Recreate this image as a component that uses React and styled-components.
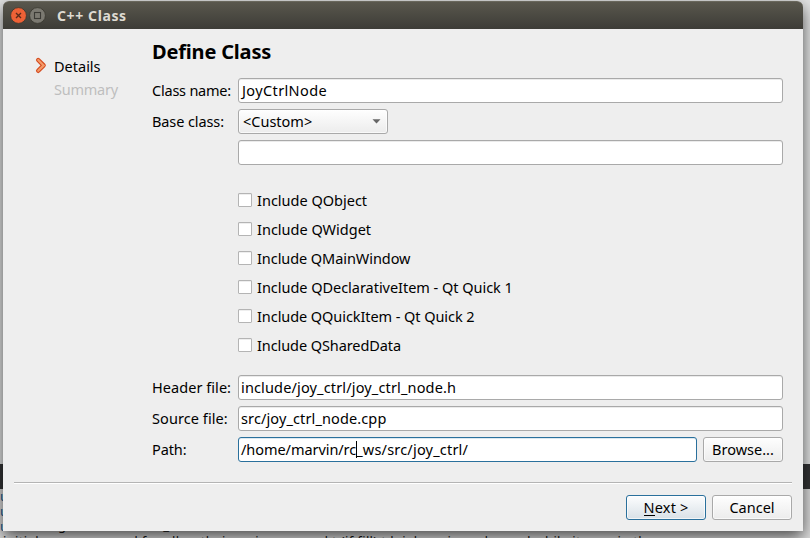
import React from "react";
import styled, { createGlobalStyle, css } from "styled-components";

const GlobalStyle = createGlobalStyle`
  * { box-sizing: border-box; }
  body { margin: 0; overflow: hidden; }
`;

const Desktop = styled.div`
  position: relative;
  width: 810px;
  height: 538px;
  overflow: hidden;
  padding: 1px 7px 0 3px;
  background: linear-gradient(#e2e3e3 0 464px, #343536 464px 489px, #dcdcdc 489px);
  font-family: "Noto Sans", "Open Sans", sans-serif;
  font-size: 14.5px;
  color: #000;
`;

const EditorText = styled.div`
  position: absolute;
  left: ${(p) => p.$x}px;
  top: ${(p) => p.$y}px;
  font-size: 13px;
  line-height: 15px;
  letter-spacing: 0.35px;
  white-space: pre;
  color: ${(p) => p.$color || "#111"};
`;

const Window = styled.main`
  position: relative;
  width: 800px;
  height: 530px;
  display: flex;
  flex-direction: column;
  background: #eee;
  border-radius: 6px 6px 0 0;
  box-shadow: 0 6px 16px rgba(0, 0, 0, 0.66);
`;

const TitleBar = styled.header`
  height: 28px;
  flex: none;
  display: flex;
  align-items: center;
  padding-left: 7px;
  border-radius: 6px 6px 0 0;
  border-top: 1px solid #69675c;
  background: linear-gradient(#59574d, #3d3c37);
`;

const WindowIcon = styled.svg`
  width: 17px;
  height: 17px;
  margin-right: 2px;
`;

const Title = styled.h1`
  margin: 0 0 0 9px;
  font-size: 14px;
  line-height: 26px;
  letter-spacing: 0.6px;
  font-weight: 700;
  color: #dfdbd2;
`;

const Body = styled.div`
  height: 453px;
  display: flex;
`;

const Steps = styled.nav`
  width: 149px;
  padding: 26px 0 0 32px;
`;

const Step = styled.div`
  height: 23px;
  display: flex;
  align-items: center;
  line-height: 23px;
  padding-left: ${(p) => (p.$active ? 0 : 19)}px;
  color: ${(p) => (p.$active ? "#000" : "#bebebe")};
`;

const StepArrow = styled.svg`
  width: 12px;
  height: 18px;
  margin: -3px 7px 0 0;
`;

const Text = styled.span`
  letter-spacing: ${(p) => p.$track || 0}px;
  white-space: pre;
`;

const Form = styled.section`
  width: 631px;
`;

const Heading = styled.h2`
  margin: 9px 0 13px;
  font-size: 20px;
  line-height: 27px;
  letter-spacing: -0.18px;
  font-weight: 700;
`;

const FieldRow = styled.div`
  display: grid;
  grid-template-columns: 86px 1fr;
  height: 25px;
  margin-bottom: 6px;
`;

const Label = styled.label`
  line-height: 25px;
  letter-spacing: ${(p) => p.$track || 0}px;
  white-space: nowrap;
`;

const FieldGroup = styled.div`
  display: flex;
  gap: 6px;
`;

const Input = styled.div`
  flex: 1;
  height: 25px;
  padding-left: ${(p) => p.$indent ?? 2}px;
  display: flex;
  line-height: 23px;
  border: 1px solid ${(p) => (p.$focus ? "#2a709c" : "#a9a9a9")};
  border-radius: 3px;
  background: #fff;
  box-shadow: inset 0 1px 0 ${(p) => (p.$focus ? "#dce8ef" : "#ebebeb")};
`;

const Caret = styled.i`
  width: 1px;
  height: 17px;
  margin: 3px -1px 0 0;
  background: #000;
`;

const raised = css`
  height: 25px;
  line-height: 23px;
  border: 1px solid #a9a9a9;
  border-radius: 3px;
  background: linear-gradient(#fefefe, #ececec);
  box-shadow: inset 0 0 0 1px rgba(255, 255, 255, 0.65);
`;

const Select = styled.div`
  ${raised}
  width: 150px;
  padding: 0 6px 0 4px;
  display: flex;
  align-items: center;
  justify-content: space-between;
`;

const Button = styled.button`
  ${raised}
  width: 80px;
  padding: 0;
  font: inherit;
  line-height: 23px;
  color: #000;
  ${(p) =>
    p.$primary &&
    css`
      border-color: #2a709c;
      background: linear-gradient(#fcfdfe, #d9e1e7);
    `}
`;

const Mnemonic = styled.span`
  display: inline-block;
  height: 18px;
  line-height: 18px;
  border-bottom: 1px solid #000;
`;

const CheckList = styled.div`
  margin: 21px 0 0 86px;
  height: 189px;
`;

const CheckRow = styled.div`
  height: 29px;
  line-height: 29px;
  display: flex;
`;

const CheckBox = styled.span`
  width: 14px;
  height: 14px;
  margin: 7px 5px 0 0;
  border: 1px solid #b4b4b4;
  border-radius: 1px;
  background: #fff;
  box-shadow: inset 0 1px 0 #eee;
`;

const Footer = styled.footer`
  margin: 0 11px;
  padding-top: 12px;
  border-top: 1px solid #b4b4b4;
  box-shadow: inset 0 1px 0 #fff;
  display: flex;
  justify-content: flex-end;
  gap: 6px;
`;

const options = [
  ["Include QObject", 0],
  ["Include QWidget", 0],
  ["Include QMainWindow", -0.07],
  ["Include QDeclarativeItem - Qt Quick 1", -0.03],
  ["Include QQuickItem - Qt Quick 2", -0.07],
  ["Include QSharedData", -0.09],
];

function CloseIcon() {
  return (
    <WindowIcon viewBox="0 0 17 17">
      <circle cx="8.5" cy="8.5" r="7.9" fill="#ee6136" stroke="#39372f" strokeWidth="0.8" />
      <path d="M6 6l5 5M11 6l-5 5" stroke="#5b2a1a" strokeWidth="1.4" />
    </WindowIcon>
  );
}

function MaximizeIcon() {
  return (
    <WindowIcon viewBox="0 0 17 17">
      <circle cx="8.5" cy="8.5" r="7.9" fill="#7b7971" stroke="#39372f" strokeWidth="0.8" />
      <rect x="5.5" y="5.5" width="6" height="6" fill="none" stroke="#3b3a35" strokeWidth="1.1" />
    </WindowIcon>
  );
}

export default function App() {
  return (
    <>
      <GlobalStyle />
      <Desktop>
        <EditorText $x={0} $y={489} $color="#1a5c93">u</EditorText>
        <EditorText $x={0} $y={504} $color="#1a5c93">u</EditorText>
        <EditorText $x={0} $y={519} $color="#1a5c93">u</EditorText>
        <EditorText $x={58} $y={518}>{"g                          _"}</EditorText>
        <EditorText $x={3} $y={534}>
          {"initial, messages and for all or their main uses and t (if fill) t.h.i. base in nodes and while it runs in the scope"}
        </EditorText>
        <Window>
          <TitleBar>
            <CloseIcon />
            <MaximizeIcon />
            <Title>C++ Class</Title>
          </TitleBar>
          <Body>
            <Steps>
              <Step $active>
                <StepArrow viewBox="0 0 12 18">
                  <path d="M3.2 4L8.6 9.4L3.2 14.8" fill="none" stroke="#d4481c" strokeWidth="4.4" strokeLinejoin="round" strokeLinecap="round" />
                  <path d="M3.2 4L8.6 9.4L3.2 14.8" fill="none" stroke="#f39a68" strokeWidth="2.2" strokeLinecap="round" />
                </StepArrow>
                <Text>Details</Text>
              </Step>
              <Step>
                <Text $track={-0.25}>Summary</Text>
              </Step>
            </Steps>
            <Form>
              <Heading>Define Class</Heading>
              <FieldRow>
                <Label $track={-0.22}>Class name:</Label>
                <Input $indent={3}><Text $track={0.38}>JoyCtrlNode</Text></Input>
              </FieldRow>
              <FieldRow>
                <Label $track={-0.1}>Base class:</Label>
                <Select>
                  <Text>&lt;Custom&gt;</Text>
                  <svg width="9" height="5" viewBox="0 0 9 5"><path d="M0.5 0.3h8L4.5 4.6z" fill="#666" /></svg>
                </Select>
              </FieldRow>
              <FieldRow>
                <span />
                <Input />
              </FieldRow>
              <CheckList>
                {options.map(([name, track]) => (
                  <CheckRow key={name}>
                    <CheckBox />
                    <Text $track={track}>{name}</Text>
                  </CheckRow>
                ))}
              </CheckList>
              <FieldRow>
                <Label $track={0.05}>Header file:</Label>
                <Input><Text $track={0.15}>include/joy_ctrl/joy_ctrl_node.h</Text></Input>
              </FieldRow>
              <FieldRow>
                <Label $track={0.08}>Source file:</Label>
                <Input><Text $track={0.12}>src/joy_ctrl_node.cpp</Text></Input>
              </FieldRow>
              <FieldRow>
                <Label $track={-0.1}>Path:</Label>
                <FieldGroup>
                  <Input $focus>
                    <Text $track={-0.06}>/home/marvin/rc</Text>
                    <Caret />
                    <Text $track={0.2}>_ws/src/joy_ctrl/</Text>
                  </Input>
                  <Button>Browse...</Button>
                </FieldGroup>
              </FieldRow>
            </Form>
          </Body>
          <Footer>
            <Button $primary><Text $track={0.15}><Mnemonic>N</Mnemonic>ext &gt;</Text></Button>
            <Button>Cancel</Button>
          </Footer>
        </Window>
      </Desktop>
    </>
  );
}
